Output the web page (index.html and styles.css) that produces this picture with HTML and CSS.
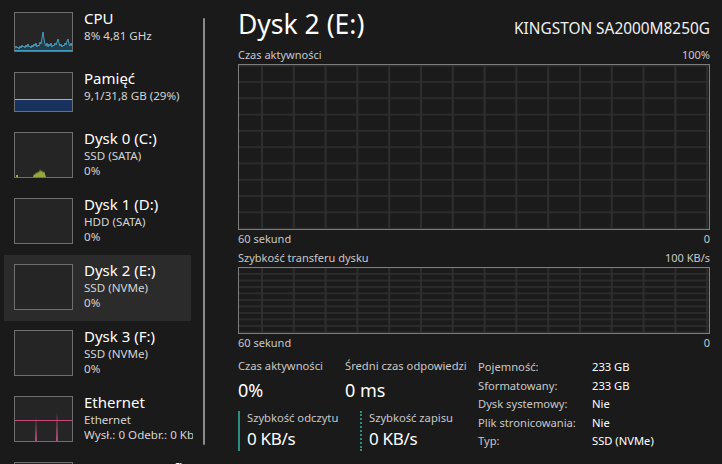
FILE: index.html
```html
<!DOCTYPE html>
<html lang="pl">
<head>
<meta charset="utf-8">
<title>Menedżer zadań — Dysk 2 (E:)</title>
<link rel="stylesheet" href="styles.css">
</head>
<body>
<div class="app">
  <aside class="sidebar">
    <div class="list">
      <div class="item short">
        <div class="thumb">
          <svg viewBox="0 0 57 38" preserveAspectRatio="none">
            <polygon class="cpu-fill" points="0,38 0,35 1,33 2,35 3,34 4,36 5,33 6,35 7,32 8,34 9,33 10,35 11,32 12,34 13,31 14,34 15,33 16,35 17,32 18,34 19,31 20,33 21,30 22,34 23,32 24,33 25,29 26,31 27,25 28,19 29,26 30,31 31,33 32,30 33,34 34,31 35,33 36,30 37,34 38,32 39,33 40,30 41,32 42,29 43,26 44,30 45,33 46,31 47,34 48,32 49,33 50,30 51,32 52,28 53,26 54,31 55,33 56,30 57,33 57,38"/>
            <polyline class="cpu-line" points="0,35 1,33 2,35 3,34 4,36 5,33 6,35 7,32 8,34 9,33 10,35 11,32 12,34 13,31 14,34 15,33 16,35 17,32 18,34 19,31 20,33 21,30 22,34 23,32 24,33 25,29 26,31 27,25 28,19 29,26 30,31 31,33 32,30 33,34 34,31 35,33 36,30 37,34 38,32 39,33 40,30 41,32 42,29 43,26 44,30 45,33 46,31 47,34 48,32 49,33 50,30 51,32 52,28 53,26 54,31 55,33 56,30 57,33"/>
            <line class="cpu-line" x1="0" y1="37.5" x2="57" y2="37.5"/>
          </svg>
        </div>
        <div class="info"><div class="name">CPU</div><div class="sub">8% 4,81 GHz</div></div>
      </div>
      <div class="item short">
        <div class="thumb">
          <svg viewBox="0 0 57 38" preserveAspectRatio="none">
            <rect class="mem-fill" x="0" y="26.5" width="57" height="11.5"/>
            <line class="mem-line" x1="0" y1="26.5" x2="57" y2="26.5"/>
          </svg>
        </div>
        <div class="info"><div class="name">Pamięć</div><div class="sub">9,1/31,8 GB (29%)</div></div>
      </div>
      <div class="item">
        <div class="thumb">
          <svg viewBox="0 0 57 44" preserveAspectRatio="none">
            <polygon class="disk-fill" points="18,44 19,41 20,42 21,39 22,41 23,38 24,40 25,36 26,39 27,37 28,40 29,38 30,41 31,44"/>
            <rect class="disk-fill" x="1" y="42" width="2" height="2"/>
          </svg>
        </div>
        <div class="info"><div class="name">Dysk 0 (C:)</div><div class="sub">SSD (SATA)</div><div class="sub">0%</div></div>
      </div>
      <div class="item">
        <div class="thumb"></div>
        <div class="info"><div class="name">Dysk 1 (D:)</div><div class="sub">HDD (SATA)</div><div class="sub">0%</div></div>
      </div>
      <div class="item selected">
        <div class="thumb"></div>
        <div class="info"><div class="name">Dysk 2 (E:)</div><div class="sub">SSD (NVMe)</div><div class="sub">0%</div></div>
      </div>
      <div class="item">
        <div class="thumb"></div>
        <div class="info"><div class="name">Dysk 3 (F:)</div><div class="sub">SSD (NVMe)</div><div class="sub">0%</div></div>
      </div>
      <div class="item">
        <div class="thumb">
          <svg viewBox="0 0 57 44" preserveAspectRatio="none">
            <line class="eth-line" x1="0" y1="23.5" x2="57" y2="23.5"/>
            <polygon class="eth-spike" points="20.2,44 21,20 21.8,44"/>
            <polygon class="eth-spike" points="41.2,44 42,14 42.8,44"/>
          </svg>
        </div>
        <div class="info"><div class="name">Ethernet</div><div class="sub">Ethernet</div><div class="sub">Wysł.: 0 Odebr.: 0 Kb/s</div></div>
      </div>
      <div class="item">
        <div class="thumb"></div>
        <div class="info"><div class="name">Procesor graficzny 0</div><div class="sub">NVIDIA</div><div class="sub">1%</div></div>
      </div>
    </div>
    <div class="scrollbar"></div>
  </aside>

  <main class="main">
    <header class="head">
      <h1 class="title">Dysk 2 (E:)</h1>
      <div class="model">KINGSTON SA2000M8250G</div>
    </header>

    <div class="row-label top-label"><span>Czas aktywności</span><span>100%</span></div>
    <div class="graph g-activity"></div>
    <div class="row-label under"><span>60 sekund</span><span>0</span></div>

    <div class="row-label top-label2"><span>Szybkość transferu dysku</span><span>100 KB/s</span></div>
    <div class="graph g-transfer"></div>
    <div class="row-label under2"><span>60 sekund</span><span>0</span></div>

    <section class="stats">
      <div class="live">
        <div class="stat">
          <div class="slabel">Czas aktywności</div>
          <div class="sval">0%</div>
        </div>
        <div class="stat">
          <div class="slabel">Średni czas odpowiedzi</div>
          <div class="sval">0 ms</div>
        </div>
        <div class="stat barred solid">
          <div class="slabel">Szybkość odczytu</div>
          <div class="sval narrow">0 KB/s</div>
        </div>
        <div class="stat barred dotted">
          <div class="slabel">Szybkość zapisu</div>
          <div class="sval narrow">0 KB/s</div>
        </div>
      </div>
      <dl class="props">
        <dt>Pojemność:</dt><dd>233 GB</dd>
        <dt>Sformatowany:</dt><dd>233 GB</dd>
        <dt>Dysk systemowy:</dt><dd>Nie</dd>
        <dt>Plik stronicowania:</dt><dd>Nie</dd>
        <dt>Typ:</dt><dd>SSD (NVMe)</dd>
      </dl>
    </section>
  </main>
</div>
</body>
</html>
```

FILE: styles.css
```css
* { box-sizing: border-box; }

html, body {
  margin: 0;
  padding: 0;
  background: #1a1a1a;
}

body {
  width: 722px;
  height: 464px;
  overflow: hidden;
  font-family: "Noto Sans", "Open Sans", sans-serif;
  color: #ffffff;
}

.app {
  display: flex;
  height: 464px;
}

/* ---------- sidebar ---------- */
.sidebar {
  width: 210px;
  flex: none;
  display: flex;
  height: 464px;
}

.list {
  width: 201px;
  height: 464px;
  overflow: hidden;
  padding-top: 3px;
}

.item {
  width: 187px;
  height: 66px;
  margin-left: 4px;
  padding: 9px 0 0 10px;
  display: flex;
  align-items: flex-start;
  gap: 11px;
}

.item.short { height: 60px; }

.item.selected { background: #2b2b2b; }

.thumb {
  width: 59px;
  height: 46px;
  flex: none;
  border: 1px solid #6f6f6f;
  background: #252525;
}

.item.short .thumb { height: 40px; }

.thumb svg {
  display: block;
  width: 100%;
  height: 100%;
}

.cpu-fill { fill: rgba(30, 120, 170, 0.3); }
.cpu-line { fill: none; stroke: #4cb4dc; stroke-width: 0.8; }
.mem-fill { fill: #17325e; }
.mem-line { stroke: #8fb4ec; stroke-width: 1; }
.disk-fill { fill: #94a83e; }
.eth-line { stroke: #c8487e; stroke-width: 1; }
.eth-spike { fill: #d65a92; }

.info {
  width: 109px;
  flex: none;
  overflow: hidden;
  white-space: nowrap;
  margin-top: -3px;
}

.name {
  font-size: 15px;
  line-height: 19px;
  color: #ffffff;
}

.sub {
  font-size: 11.6px;
  line-height: 15px;
  color: #d4d4d4;
}

.scrollbar {
  width: 2px;
  margin-left: 2px;
  margin-top: 18px;
  height: 427px;
  background: #8a8a8a;
  border-radius: 1px;
}

/* ---------- main ---------- */
.main {
  width: 512px;
  padding: 0 12px 0 28px;
  display: flex;
  flex-direction: column;
}

.head {
  display: flex;
  justify-content: space-between;
  align-items: baseline;
  padding-top: 6px;
  height: 42px;
}

.title {
  margin: 0;
  font-size: 26.5px;
  line-height: 36px;
  font-weight: 400;
  color: #ffffff;
}

.model {
  font-size: 15.4px;
  line-height: 20px;
  color: #f0f0f0;
}

.row-label {
  display: flex;
  justify-content: space-between;
  font-size: 11px;
  line-height: 16px;
  color: #c8c8c8;
}

.top-label { margin-top: 5px; }
.under { margin-top: 1px; }
.top-label2 { margin-top: 3px; }
.under2 { margin-top: 1px; }

.graph {
  border: 1px solid #7d7d7d;
  margin-top: 1px;
  background-color: #1b1b1b;
  background-image:
    linear-gradient(to right, #2e2e2e 0, #2e2e2e 2px, transparent 2px),
    linear-gradient(to bottom, #2b2b2b 0, #2b2b2b 2px, transparent 2px);
  background-repeat: repeat;
}

.g-activity {
  height: 166px;
  background-size: 31.8px 100%, 100% 16.3px;
  background-position: 22px 0, 0 16px;
}

.g-transfer {
  height: 67px;
  background-size: 31.8px 100%, 100% 6.5px;
  background-position: 22px 0, 0 5px;
}

/* ---------- stats ---------- */
.stats {
  display: flex;
  margin-top: 7px;
}

.live {
  width: 240px;
  display: grid;
  grid-template-columns: 107px 133px;
}

.slabel {
  font-size: 11.2px;
  line-height: 16px;
  color: #c8c8c8;
  white-space: nowrap;
}

.sval {
  font-size: 18px;
  line-height: 24px;
  margin-top: 4px;
  color: #ffffff;
  white-space: nowrap;
}

.sval.narrow {
  font-size: 17px;
  letter-spacing: -0.3px;
}

.stat.barred {
  margin-top: 9px;
  padding-left: 7px;
  height: 40px;
  border-left: 2px solid #2a8f7e;
}

.stat.barred .slabel { line-height: 14px; }
.stat.barred .sval { margin-top: 2px; }

.stat.dotted {
  margin-left: 15px;
  border-left: 2px dotted #2a8f7e;
}

.props {
  margin: 0;
  display: grid;
  grid-template-columns: 114px auto;
  font-size: 11.2px;
  line-height: 18px;
  color: #ffffff;
}

.props dt {
  color: #c8c8c8;
  white-space: nowrap;
}

.props dd {
  margin: 0;
  white-space: nowrap;
}
```
